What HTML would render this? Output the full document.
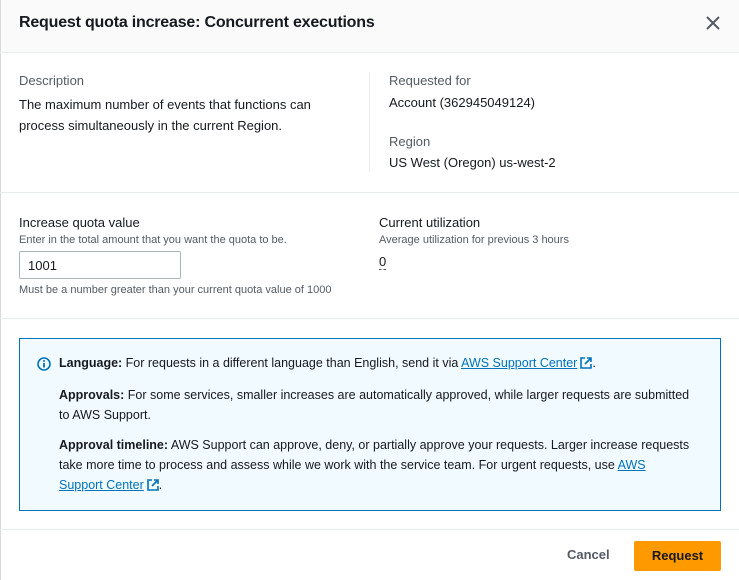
<!DOCTYPE html>
<html><head><style>
*{margin:0;padding:0;box-sizing:border-box}
body{width:739px;height:580px;background:#fff;font-family:"Liberation Sans",sans-serif;color:#16191f;position:relative;overflow:hidden;font-size:13px}
.a{position:absolute;white-space:nowrap}
.g{color:#545b64}
a{color:#0073bb;text-decoration:underline}
.hr{position:absolute;left:0;width:739px;height:1px;background:#eaeded}
.ext{display:inline-block;vertical-align:-2px;margin-left:3px}
</style></head><body>
<div style="position:absolute;left:0;top:0;width:739px;height:52px;background:#fafafa"></div>
<div style="position:absolute;left:0;top:0;width:1px;height:580px;background:#d5dbdb"></div>
<div class="hr" style="top:52px"></div>
<div class="a" style="left:19px;top:14px;font-size:16px;font-weight:bold;letter-spacing:-0.2px">Request quota increase: Concurrent executions</div>
<svg class="a" style="left:706px;top:16px" width="14" height="14" viewBox="0 0 14 14"><path d="M1 1L13 13M13 1L1 13" stroke="#545b64" stroke-width="2"/></svg>

<div class="a g" style="left:19px;top:73px">Description</div>
<div class="a" style="left:19px;top:94px;line-height:21px">The maximum number of events that functions can<br>process simultaneously in the current Region.</div>
<div style="position:absolute;left:369px;top:72px;width:1px;height:100px;background:#eaeded"></div>
<div class="a g" style="left:389px;top:73px">Requested for</div>
<div class="a" style="left:389px;top:95px">Account (362945049124)</div>
<div class="a g" style="left:389px;top:134px">Region</div>
<div class="a" style="left:389px;top:155px">US West (Oregon) us-west-2</div>
<div class="hr" style="top:192px"></div>

<div class="a" style="left:19px;top:215px">Increase quota value</div>
<div class="a g" style="left:19px;top:234px;font-size:11px">Enter in the total amount that you want the quota to be.</div>
<div style="position:absolute;left:19px;top:251px;width:162px;height:28px;border:1px solid #aab7b8;border-radius:2px;padding:6px 8px">1001</div>
<div class="a g" style="left:19px;top:284px;font-size:11px">Must be a number greater than your current quota value of 1000</div>
<div class="a" style="left:379px;top:215px">Current utilization</div>
<div class="a g" style="left:379px;top:234px;font-size:11px">Average utilization for previous 3 hours</div>
<div class="a" style="left:379px;top:254px;border-bottom:1px dashed #545b64;line-height:15px">0</div>
<div class="hr" style="top:318px"></div>

<div style="position:absolute;left:19px;top:338px;width:702px;height:173px;background:#f1faff;border:1px solid #0073bb"></div>
<svg class="a" style="left:37px;top:357px" width="14" height="14" viewBox="0 0 14 14"><circle cx="7" cy="7" r="6" fill="none" stroke="#0073bb" stroke-width="1.6"/><path d="M7 6v4.5" stroke="#0073bb" stroke-width="1.8"/><circle cx="7" cy="4" r="1" fill="#0073bb"/></svg>
<div class="a" style="left:59px;top:356px;font-size:12.5px"><b>Language:</b> For requests in a different language than English, send it via <a>AWS Support Center</a><svg class="ext" width="12" height="12" viewBox="0 0 12 12"><path d="M5 1H1v10h10V7M7 1h4v4M11 1L5 7" fill="none" stroke="#0073bb" stroke-width="1.6"/></svg>.</div>
<div class="a" style="left:59px;top:385px;font-size:12.5px;line-height:20px"><b>Approvals:</b> For some services, smaller increases are automatically approved, while larger requests are submitted<br>to AWS Support.</div>
<div class="a" style="left:59px;top:435px;font-size:12.5px;line-height:20px"><b>Approval timeline:</b> AWS Support can approve, deny, or partially approve your requests. Larger increase requests<br>take more time to process and assess while we work with the service team. For urgent requests, use <a>AWS</a><br><a>Support Center</a><svg class="ext" width="12" height="12" viewBox="0 0 12 12"><path d="M5 1H1v10h10V7M7 1h4v4M11 1L5 7" fill="none" stroke="#0073bb" stroke-width="1.6"/></svg>.</div>
<div class="hr" style="top:529px"></div>

<div class="a" style="left:567px;top:547px;font-weight:bold;color:#545b64">Cancel</div>
<div style="position:absolute;left:634px;top:541px;width:87px;height:30px;background:#ff9900;border-radius:2px;font-weight:bold;text-align:center;line-height:30px">Request</div>
</body></html>
